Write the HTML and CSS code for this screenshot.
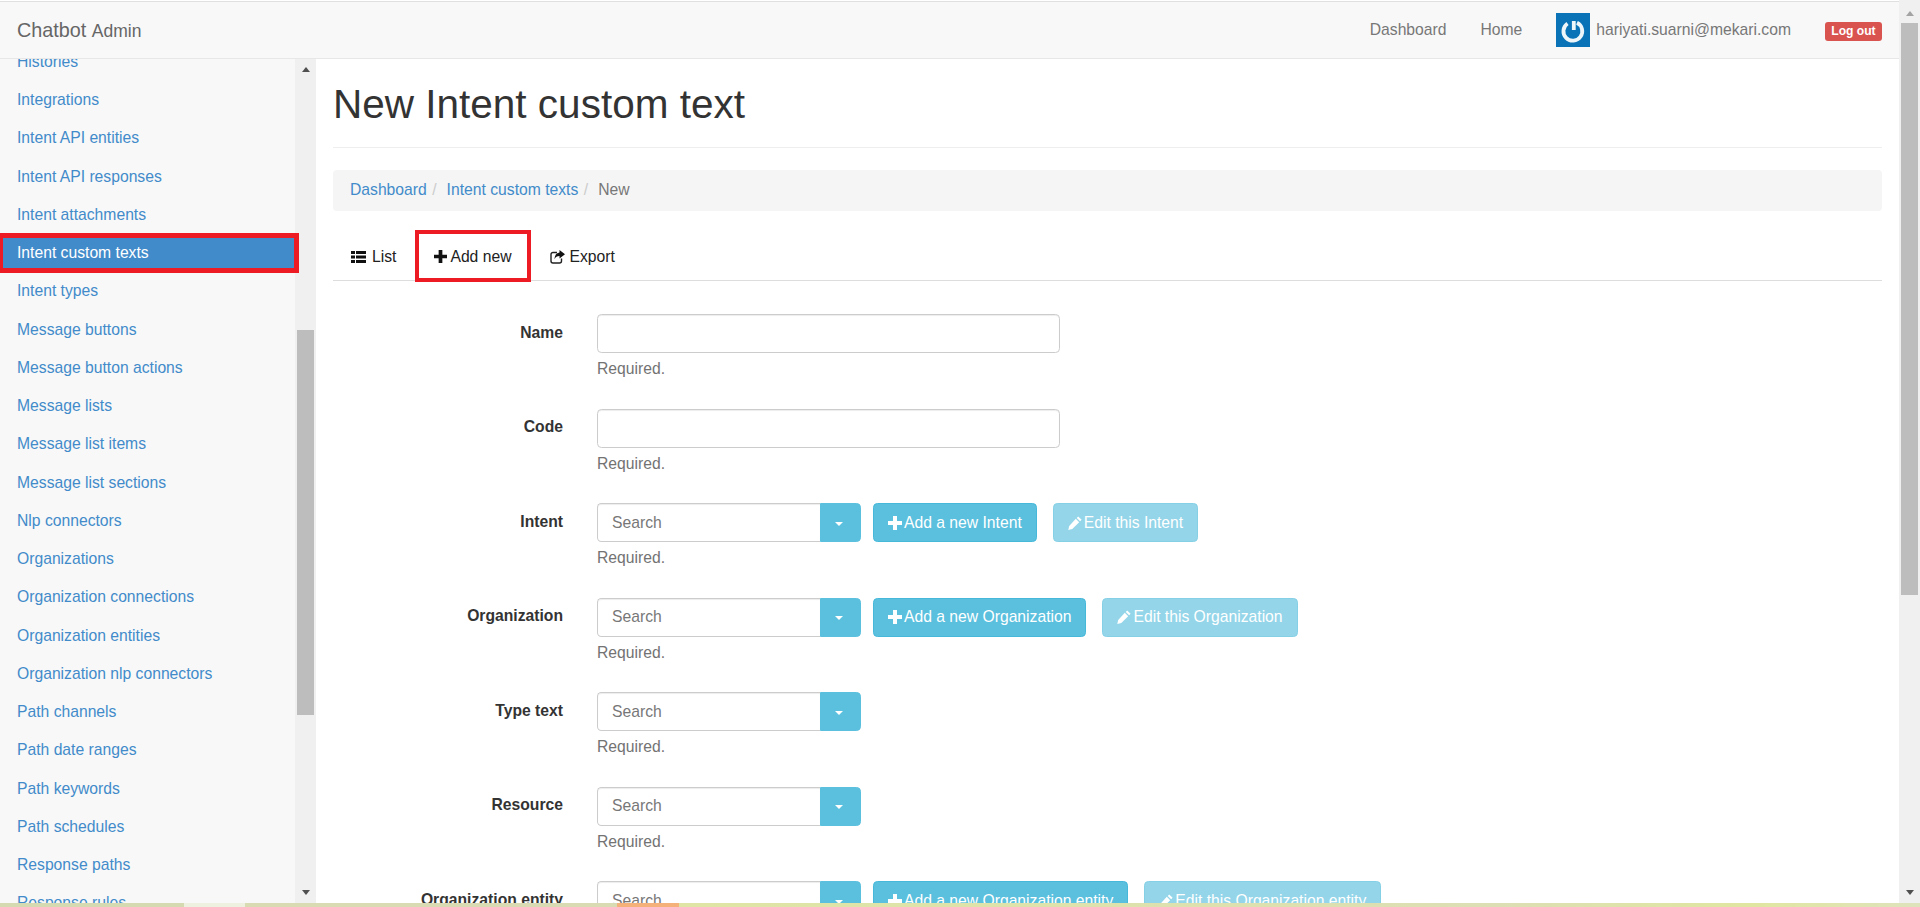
FILE: index.html
```html
<!DOCTYPE html>
<html lang="en">
<head>
    <meta charset="UTF-8">
    <meta name="viewport" content="width=device-width, initial-scale=1.0">
    <title>New Intent custom text</title>
    <link rel="stylesheet" href="styles.css">
</head>
<body>

    <svg class="sprite" aria-hidden="true">
        <symbol id="icon-plus" viewBox="0 0 14 14"><path d="M5 0h4v5h5v4H9v5H5V9H0V5h5z"/></symbol>
        <symbol id="icon-pencil" viewBox="0 0 14 14"><path d="M10.2 0.4l3.4 3.4-1.5 1.5-3.4-3.4zM7.8 2.8l3.4 3.4-6.9 6.9-4 .9.9-4z"/></symbol>
    </svg>

    <div class="app">
        <div class="main">
            <nav class="navbar">
                <a class="brand" href="#">Chatbot <small>Admin</small></a>
                <ul class="top-links">
                    <li><a href="#">Dashboard</a></li>
                    <li><a href="#">Home</a></li>
                    <li class="user">
                        <svg class="avatar" viewBox="0 0 34 34">
                            <rect width="34" height="34" fill="#0a73b7"/>
                            <path d="M21 9.800A9.400 9.400 0 1 1 11.500 10.500" fill="none" stroke="#eef6fa" stroke-width="3.800"/>
                            <path d="M17.800 8v9" fill="none" stroke="#eef6fa" stroke-width="3.800"/>
                        </svg>
                        <span>hariyati.suarni@mekari.com</span>
                    </li>
                    <li><a class="logout" href="#">Log out</a></li>
                </ul>
            </nav>

            <div class="columns">
                <aside class="sidebar">
                    <ul class="side-nav">
                        <li><a href="#">Histories</a></li>
                        <li><a href="#">Integrations</a></li>
                        <li><a href="#">Intent API entities</a></li>
                        <li><a href="#">Intent API responses</a></li>
                        <li><a href="#">Intent attachments</a></li>
                        <li><a class="active" href="#">Intent custom texts</a></li>
                        <li><a href="#">Intent types</a></li>
                        <li><a href="#">Message buttons</a></li>
                        <li><a href="#">Message button actions</a></li>
                        <li><a href="#">Message lists</a></li>
                        <li><a href="#">Message list items</a></li>
                        <li><a href="#">Message list sections</a></li>
                        <li><a href="#">Nlp connectors</a></li>
                        <li><a href="#">Organizations</a></li>
                        <li><a href="#">Organization connections</a></li>
                        <li><a href="#">Organization entities</a></li>
                        <li><a href="#">Organization nlp connectors</a></li>
                        <li><a href="#">Path channels</a></li>
                        <li><a href="#">Path date ranges</a></li>
                        <li><a href="#">Path keywords</a></li>
                        <li><a href="#">Path schedules</a></li>
                        <li><a href="#">Response paths</a></li>
                        <li><a href="#">Response rules</a></li>
                    </ul>
                    <div class="scrollbar side-scroll">
                        <div class="arrow"><i class="tri-up"></i></div>
                        <div class="thumb"></div>
                        <div class="arrow arrow-end"><i class="tri-down"></i></div>
                    </div>
                </aside>

                <main class="content">
                    <h1 class="page-title">New Intent custom text</h1>

                    <ol class="breadcrumb">
                        <li><a href="#">Dashboard</a></li>
                        <li><a href="#">Intent custom texts</a></li>
                        <li class="current">New</li>
                    </ol>

                    <ul class="tabs">
                        <li class="tab-list"><a href="#">
                            <svg class="tab-icon" viewBox="0 0 15 14"><path d="M0 1h4v3H0zM5 1h10v3H5zM0 5.500h4v3H0zM5 5.500h10v3H5zM0 10h4v3H0zM5 10h10v3H5z"/></svg>
                            List</a></li>
                        <li class="tab-marked"><a href="#">
                            <svg class="tab-icon tab-plus"><use href="#icon-plus"/></svg>
                            Add new</a></li>
                        <li class="tab-export"><a href="#">
                            <svg class="tab-icon" viewBox="0 0 15 14"><path d="M7 2.500H3A2 2 0 0 0 1 4.500v6.500a2 2 0 0 0 2 2h6.500a2 2 0 0 0 2-2V8.500" fill="none" stroke="#222" stroke-width="1.400"/><path d="M9.500 0L15 4.200 9.500 8.400V6C7 6 5.500 7 4.500 9.300 4.500 5.500 6.500 3 9.500 2.600z"/></svg>
                            Export</a></li>
                    </ul>

                    <form class="record-form">
                        <div class="form-row">
                            <label for="name">Name</label>
                            <div class="field">
                                <input class="text-input" type="text" id="name">
                                <p class="help">Required.</p>
                            </div>
                        </div>
                        <div class="form-row">
                            <label for="code">Code</label>
                            <div class="field">
                                <input class="text-input" type="text" id="code">
                                <p class="help">Required.</p>
                            </div>
                        </div>
                        <div class="form-row">
                            <label for="intent">Intent</label>
                            <div class="field">
                                <div class="field-line">
                                    <div class="combo">
                                        <input type="text" id="intent" placeholder="Search">
                                        <button type="button" class="combo-btn"><i class="caret"></i></button>
                                    </div>
                                    <button type="button" class="btn"><svg class="btn-icon"><use href="#icon-plus"/></svg>Add a new Intent</button>
                                    <button type="button" class="btn btn-off"><svg class="btn-icon"><use href="#icon-pencil"/></svg>Edit this Intent</button>
                                </div>
                                <p class="help">Required.</p>
                            </div>
                        </div>
                        <div class="form-row">
                            <label for="organization">Organization</label>
                            <div class="field">
                                <div class="field-line">
                                    <div class="combo">
                                        <input type="text" id="organization" placeholder="Search">
                                        <button type="button" class="combo-btn"><i class="caret"></i></button>
                                    </div>
                                    <button type="button" class="btn"><svg class="btn-icon"><use href="#icon-plus"/></svg>Add a new Organization</button>
                                    <button type="button" class="btn btn-off"><svg class="btn-icon"><use href="#icon-pencil"/></svg>Edit this Organization</button>
                                </div>
                                <p class="help">Required.</p>
                            </div>
                        </div>
                        <div class="form-row">
                            <label for="typeText">Type text</label>
                            <div class="field">
                                <div class="field-line">
                                    <div class="combo">
                                        <input type="text" id="typeText" placeholder="Search">
                                        <button type="button" class="combo-btn"><i class="caret"></i></button>
                                    </div>
                                </div>
                                <p class="help">Required.</p>
                            </div>
                        </div>
                        <div class="form-row">
                            <label for="resource">Resource</label>
                            <div class="field">
                                <div class="field-line">
                                    <div class="combo">
                                        <input type="text" id="resource" placeholder="Search">
                                        <button type="button" class="combo-btn"><i class="caret"></i></button>
                                    </div>
                                </div>
                                <p class="help">Required.</p>
                            </div>
                        </div>
                        <div class="form-row">
                            <label for="orgEntity">Organization entity</label>
                            <div class="field">
                                <div class="field-line">
                                    <div class="combo">
                                        <input type="text" id="orgEntity" placeholder="Search">
                                        <button type="button" class="combo-btn"><i class="caret"></i></button>
                                    </div>
                                    <button type="button" class="btn"><svg class="btn-icon"><use href="#icon-plus"/></svg>Add a new Organization entity</button>
                                    <button type="button" class="btn btn-off"><svg class="btn-icon"><use href="#icon-pencil"/></svg>Edit this Organization entity</button>
                                </div>
                                <p class="help">Required.</p>
                            </div>
                        </div>
                    </form>
                </main>
            </div>
        </div>

        <div class="scrollbar page-scroll">
            <div class="arrow"><i class="tri-up"></i></div>
            <div class="thumb"></div>
            <div class="arrow arrow-end"><i class="tri-down"></i></div>
        </div>
    </div>

    <div class="desktop-strip"></div>

</body>
</html>
```

FILE: styles.css
```css
* {
    box-sizing: border-box;
}

html, body {
    height: 100%;
}

body {
    margin: 0;
    overflow: hidden;
    display: flex;
    flex-direction: column;
    background: #fff;
    color: #333;
    font-family: "Liberation Sans", Arial, sans-serif;
    font-size: 15.7px;
    line-height: 22px;
}

a {
    color: #428bca;
    text-decoration: none;
}

ul, ol {
    list-style: none;
    margin: 0;
    padding: 0;
}

.sprite {
    display: none;
}

.app {
    flex: 1;
    min-height: 0;
    display: flex;
    overflow: hidden;
}

.main {
    flex: 1;
    min-width: 0;
    display: flex;
    flex-direction: column;
}

/* top bar */
.navbar {
    height: 58px;
    margin-top: 1px;
    padding: 0 17px;
    display: flex;
    align-items: center;
    background: #f8f8f8;
    border-top: 1px solid #e0e0e0;
    border-bottom: 1px solid #e7e7e7;
}

.brand {
    color: #666;
    font-size: 19.8px;
}

.brand small {
    font-size: 17.5px;
}

.top-links {
    margin-left: auto;
    display: flex;
    align-items: center;
    gap: 34px;
}

.top-links a {
    color: #777;
}

.user {
    display: flex;
    align-items: center;
    gap: 6px;
    color: #777;
}

.avatar {
    width: 34px;
    height: 34px;
    display: block;
}

.top-links .logout {
    display: block;
    width: 57px;
    height: 19px;
    margin-top: 3px;
    background: #d9534f;
    border-radius: 3px;
    color: #fff;
    font-size: 12.1px;
    font-weight: bold;
    line-height: 19px;
    text-align: center;
}

.columns {
    flex: 1;
    min-height: 0;
    display: flex;
}

/* left menu */
.sidebar {
    width: 316px;
    flex-shrink: 0;
    display: flex;
    overflow: hidden;
    background: #f8f8f8;
}

.side-nav {
    flex: 1;
    margin-top: -17.3px;
}

.side-nav a {
    display: block;
    height: 38.26px;
    padding: 9.2px 17px 0;
}

.side-nav .active {
    position: relative;
    z-index: 1;
    background: #428bca;
    color: #fff;
}

.side-nav .active::after {
    content: "";
    position: absolute;
    top: 0;
    left: -2px;
    right: -4px;
    bottom: -2px;
    border: 5px solid #ed1c24;
}

/* drawn scrollbars */
.scrollbar {
    width: 21px;
    flex-shrink: 0;
    display: flex;
    flex-direction: column;
    align-items: center;
    background: #f0f0f0;
}

.arrow {
    width: 100%;
    height: 21px;
    flex-shrink: 0;
    display: flex;
    align-items: center;
    justify-content: center;
}

.arrow-end {
    margin-top: auto;
}

.tri-up, .tri-down {
    width: 0;
    height: 0;
    border-left: 4.5px solid transparent;
    border-right: 4.5px solid transparent;
}

.tri-up {
    border-bottom: 5px solid #505050;
}

.tri-down {
    border-top: 5px solid #505050;
}

.thumb {
    width: 17px;
    background: #bdbdbd;
}

.side-scroll .thumb {
    height: 385px;
    margin-top: 250px;
}

.page-scroll .arrow:first-child {
    height: 23px;
    padding-top: 3px;
}

.page-scroll .tri-up {
    border-bottom-color: #a3a3a3;
}

.page-scroll .thumb {
    height: 572px;
}

/* page body */
.content {
    flex: 1;
    min-width: 0;
    padding: 0 17px;
    overflow: hidden;
}

.page-title {
    margin: 0;
    padding: 23px 0 21px;
    border-bottom: 1px solid #eee;
    font-size: 40.5px;
    font-weight: normal;
    line-height: 44px;
}

.breadcrumb {
    height: 41px;
    margin-top: 22px;
    padding: 0 17px 2px;
    display: flex;
    align-items: center;
    background: #f5f5f5;
    border-radius: 4px;
}

.breadcrumb li + li::before {
    content: "/";
    padding: 0 10px 0 5.5px;
    color: #ccc;
}

.breadcrumb .current {
    color: #777;
}

.tabs {
    height: 48px;
    margin-top: 22px;
    display: flex;
    gap: 2px;
    border-bottom: 1px solid #ddd;
}

.tabs li {
    position: relative;
}

.tabs a {
    display: flex;
    align-items: center;
    gap: 4px;
    height: 47px;
    padding: 0 18px;
    color: #222;
}

.tab-list a {
    gap: 6px;
}

.tab-marked a {
    gap: 3px;
}

.tab-export a {
    padding-left: 19px;
}

.tab-icon {
    width: 15px;
    height: 14px;
    fill: #111;
}

.tab-plus {
    width: 13px;
    height: 13px;
}

/* red annotation round the tab */
.tab-marked::after {
    content: "";
    position: absolute;
    top: -3px;
    left: -1px;
    right: -2px;
    bottom: -2px;
    border: 4.500px solid #ed1c24;
}

/* form */
.record-form {
    margin-top: 33px;
}

.form-row {
    display: flex;
    gap: 34px;
    margin-bottom: 28.500px;
}

.form-row label {
    width: 230px;
    flex-shrink: 0;
    padding-top: 7.500px;
    font-weight: bold;
    text-align: right;
}

.field {
    min-width: 0;
}

.text-input {
    display: block;
    width: 463px;
    height: 39px;
    border: 1px solid #ccc;
    border-radius: 4.400px;
    box-shadow: inset 0 1px 1px rgba(0, 0, 0, .075);
}

.help {
    margin: 5px 0 0;
    color: #737373;
}

.field-line {
    display: flex;
    align-items: stretch;
    height: 39px;
    white-space: nowrap;
}

.combo {
    display: flex;
    margin-right: 12px;
}

.combo input {
    width: 223px;
    padding: 0 14px;
    border: 1px solid #ccc;
    border-right: 0;
    border-radius: 4.400px 0 0 4.400px;
    box-shadow: inset 0 1px 1px rgba(0, 0, 0, .075);
    color: #555;
    font: inherit;
}

.combo input::placeholder {
    color: #777;
    opacity: 1;
}

.combo-btn {
    width: 41px;
    padding: 0;
    display: flex;
    align-items: center;
    justify-content: center;
    background: #5bc0de;
    border: 1px solid #5bc0de;
    border-radius: 0 4.400px 4.400px 0;
}

.caret {
    width: 0;
    height: 0;
    margin-top: 2px;
    margin-left: -4px;
    border-top: 4.400px solid #fff;
    border-left: 4.400px solid transparent;
    border-right: 4.400px solid transparent;
}

.btn {
    display: flex;
    align-items: center;
    gap: 2px;
    padding: 0 14px;
    background: #5bc0de;
    border: 1px solid #46b8da;
    border-radius: 4.400px;
    color: #fff;
    font: inherit;
}

.btn-off {
    margin-left: 16px;
    opacity: .65;
}

.btn-icon {
    width: 14px;
    height: 14px;
    fill: #fff;
}

.desktop-strip {
    height: 4px;
    flex-shrink: 0;
    background: linear-gradient(to right,
        #d5dab0 0, #d5dab0 184px,
        #eef1df 184px, #eef1df 245px,
        #d9dcb2 245px, #d9dcb2 617px,
        #f4b27a 617px, #f4b27a 679px,
        #dfe5a4 679px, #dcdfb4 1500px, #e0e6a0 1750px, #dfe3bc 100%);
}
```
